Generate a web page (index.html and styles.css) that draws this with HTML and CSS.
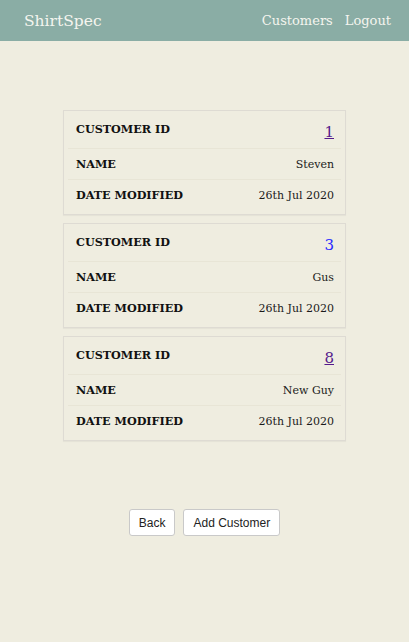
FILE: index.html
```html
<!DOCTYPE html>
<html lang="en">
<head>
<meta charset="utf-8">
<title>ShirtSpec</title>
<link rel="stylesheet" href="styles.css">
</head>
<body>
<header class="topbar">
  <a class="brand" href="#">ShirtSpec</a>
  <nav class="nav">
    <a href="#">Customers</a>
    <a href="#">Logout</a>
  </nav>
</header>
<main class="content">
  <section class="list">
    <div class="card">
      <div class="row row-id"><span class="label">CUSTOMER ID</span><a class="id visited" href="#">1</a></div>
      <div class="row"><span class="label">NAME</span><span class="value">Steven</span></div>
      <div class="row row-last"><span class="label">DATE MODIFIED</span><span class="value">26th Jul 2020</span></div>
    </div>
    <div class="card">
      <div class="row row-id"><span class="label">CUSTOMER ID</span><a class="id hover" href="#">3</a></div>
      <div class="row"><span class="label">NAME</span><span class="value">Gus</span></div>
      <div class="row row-last"><span class="label">DATE MODIFIED</span><span class="value">26th Jul 2020</span></div>
    </div>
    <div class="card">
      <div class="row row-id"><span class="label">CUSTOMER ID</span><a class="id visited" href="#">8</a></div>
      <div class="row"><span class="label">NAME</span><span class="value">New Guy</span></div>
      <div class="row row-last"><span class="label">DATE MODIFIED</span><span class="value">26th Jul 2020</span></div>
    </div>
  </section>
  <div class="actions">
    <button class="btn" type="button">Back</button>
    <button class="btn" type="button">Add Customer</button>
  </div>
</main>
</body>
</html>
```
FILE: styles.css
```css
html, body {
  margin: 0;
  padding: 0;
}
body {
  background: #efede0;
  font-family: "DejaVu Serif", Georgia, serif;
  color: #111;
  min-height: 642px;
}
.topbar {
  height: 41px;
  background: #8aada5;
  display: flex;
  align-items: center;
  justify-content: space-between;
  padding: 0 18px 0 24px;
  box-sizing: border-box;
}
.brand {
  color: #f5f5ef;
  text-decoration: none;
  font-size: 15.5px;
}
.nav {
  display: flex;
  gap: 12px;
}
.nav a {
  color: #f5f5ef;
  text-decoration: none;
  font-size: 13px;
}
.content {
  padding-top: 69px;
}
.list {
  width: 283px;
  margin: 0 auto;
  display: flex;
  flex-direction: column;
  gap: 8px;
}
.card {
  border: 1px solid #dedbd3;
  padding: 0 4px 1px;
  box-shadow: 0 1px 1px rgba(0,0,0,0.04);
}
.row {
  display: flex;
  justify-content: space-between;
  align-items: flex-start;
  padding: 6px 7px 5px 8px;
  border-top: 1px solid #e8e5d6;
  font-size: 11px;
  line-height: 19px;
}
.row-id {
  border-top: none;
  padding-top: 9px;
  padding-bottom: 6px;
}
.row-last {
  padding-bottom: 8px;
}
.label {
  font-weight: bold;
  font-size: 11.2px;
}
.value {
  color: #1a1a1a;
}
.id {
  font-size: 15px;
  line-height: 22px;
  margin-top: 1px;
  margin-bottom: -1px;
}
.id.visited {
  color: #551a8b;
  text-decoration: underline;
}
.id.hover {
  color: #2a2aff;
  text-decoration: none;
}
.actions {
  display: flex;
  justify-content: center;
  gap: 8px;
  margin-top: 68px;
}
.btn {
  font-family: "Liberation Sans", Arial, sans-serif;
  font-size: 12px;
  color: #222;
  background: #fff;
  border: 1px solid #c9c9c9;
  border-radius: 3px;
  height: 27px;
  padding: 0 9px;
}
```
